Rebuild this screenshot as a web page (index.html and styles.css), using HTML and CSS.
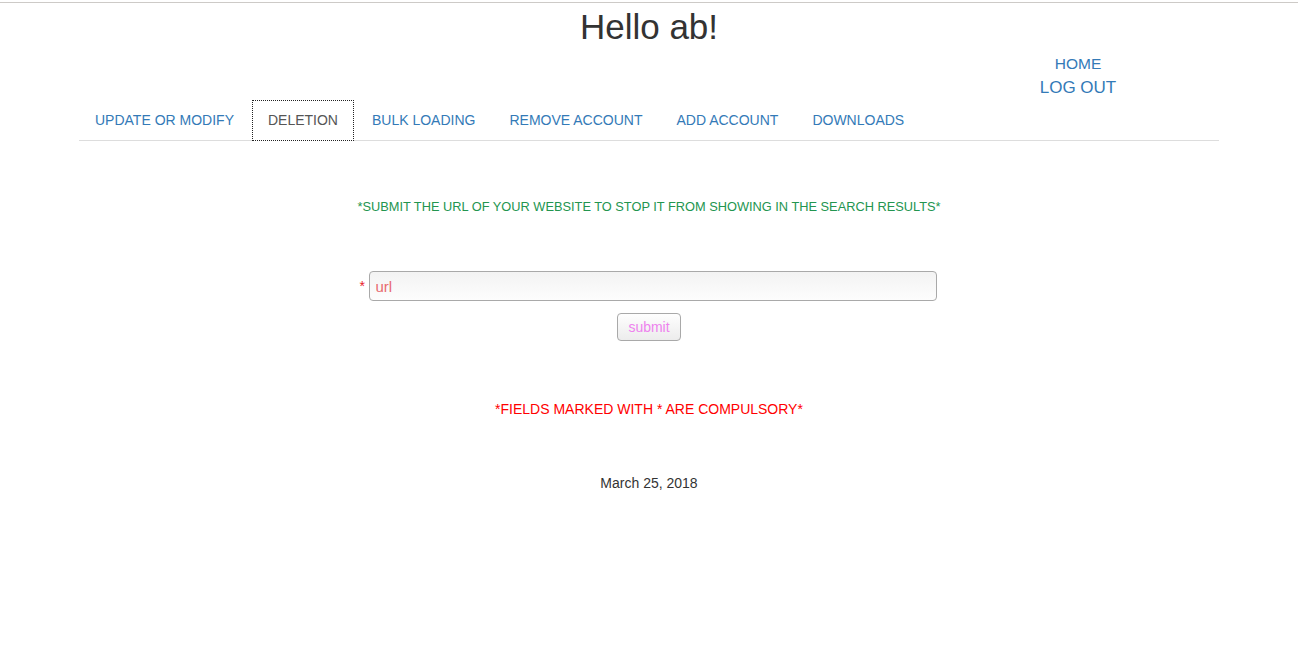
FILE: index.html
```html
<!DOCTYPE html>
<html lang="en">
<head>
<meta charset="utf-8">
<title>Hello ab!</title>
<link rel="stylesheet" href="styles.css">
</head>
<body>
<div class="topline"></div>
<div class="container">
  <h1 class="greeting">Hello ab!</h1>
  <div class="userlinks">
    <div class="userlinks-col">
      <a class="home" href="#">HOME</a>
      <a class="logout" href="#">LOG OUT</a>
    </div>
  </div>
  <ul class="tabs">
    <li><a href="#">UPDATE OR MODIFY</a></li>
    <li class="active"><a href="#">DELETION</a></li>
    <li><a href="#">BULK LOADING</a></li>
    <li><a href="#">REMOVE ACCOUNT</a></li>
    <li><a href="#">ADD ACCOUNT</a></li>
    <li><a href="#">DOWNLOADS</a></li>
  </ul>
  <p class="notice">*SUBMIT THE URL OF YOUR WEBSITE TO STOP IT FROM SHOWING IN THE SEARCH RESULTS*</p>
  <form class="form" onsubmit="return false;">
    <div class="field">
      <span class="req">*</span>
      <input class="url" type="text" placeholder="url">
    </div>
    <button class="submit" type="submit">submit</button>
  </form>
  <p class="compulsory">*FIELDS MARKED WITH * ARE COMPULSORY*</p>
  <p class="date">March 25, 2018</p>
</div>
</body>
</html>
```
FILE: styles.css
```css
html, body {
  margin: 0;
  padding: 0;
  background: #fff;
}
body {
  font-family: "Liberation Sans", Arial, Helvetica, sans-serif;
  font-size: 14px;
  line-height: 20px;
  color: #333;
}
.topline {
  height: 1px;
  margin-top: 2px;
  background: #cdcac7;
}
.container {
  width: 1140px;
  margin: 0 auto;
}
.greeting {
  margin: 4px 0 0;
  font-size: 35px;
  line-height: 40px;
  font-weight: 500;
  text-align: center;
  color: #333;
}
.userlinks {
  display: flex;
  justify-content: flex-end;
  margin-top: 5px;
  padding-right: 85px;
}
.userlinks-col {
  display: flex;
  flex-direction: column;
  align-items: center;
  width: 112px;
}
.userlinks a {
  color: #337ab7;
  text-decoration: none;
  line-height: 24px;
}
.home {
  font-size: 15.5px;
}
.logout {
  font-size: 17px;
}
.tabs {
  display: flex;
  list-style: none;
  margin: 0;
  padding: 0;
  border-bottom: 1px solid #ddd;
}
.tabs li {
  margin-right: 2px;
  margin-bottom: -1px;
}
.tabs a {
  display: block;
  padding: 9px 15px 10px;
  border: 1px solid transparent;
  color: #337ab7;
  text-decoration: none;
  line-height: 20px;
}
.tabs li.active a {
  color: #555;
  background: #fff;
  border: 1px dotted #222;
}
.notice {
  margin: 56px 0 0;
  text-align: center;
  font-size: 12.8px;
  color: #23954f;
}
.form {
  margin: 54px 0 0;
  display: flex;
  flex-direction: column;
  align-items: center;
}
.field {
  display: flex;
  align-items: center;
  gap: 2px;
  margin-right: 2px;
}
.req {
  color: #e8202a;
  font-size: 14px;
  width: 7px;
}
.url {
  width: 568px;
  height: 30px;
  box-sizing: border-box;
  padding: 0 6px;
  border: 1px solid #a9a9a9;
  border-radius: 4px;
  background: linear-gradient(#f3f3f3, #fdfdfd);
  font-family: "Liberation Sans", Arial, sans-serif;
  font-size: 15px;
  color: #e0606a;
}
.url::placeholder {
  color: #e86a70;
}
.submit {
  margin-top: 12px;
  width: 64px;
  height: 28px;
  box-sizing: border-box;
  border: 1px solid #a9a9a9;
  border-radius: 4px;
  background: linear-gradient(#fefefe, #ececec);
  font-family: "Liberation Sans", Arial, sans-serif;
  font-size: 14px;
  color: #ee82ee;
  padding: 0;
}
.compulsory {
  margin: 58px 0 0;
  text-align: center;
  font-size: 14px;
  color: #ff0000;
}
.date {
  margin: 54px 0 0;
  text-align: center;
  font-size: 14px;
  color: #333;
}
```
